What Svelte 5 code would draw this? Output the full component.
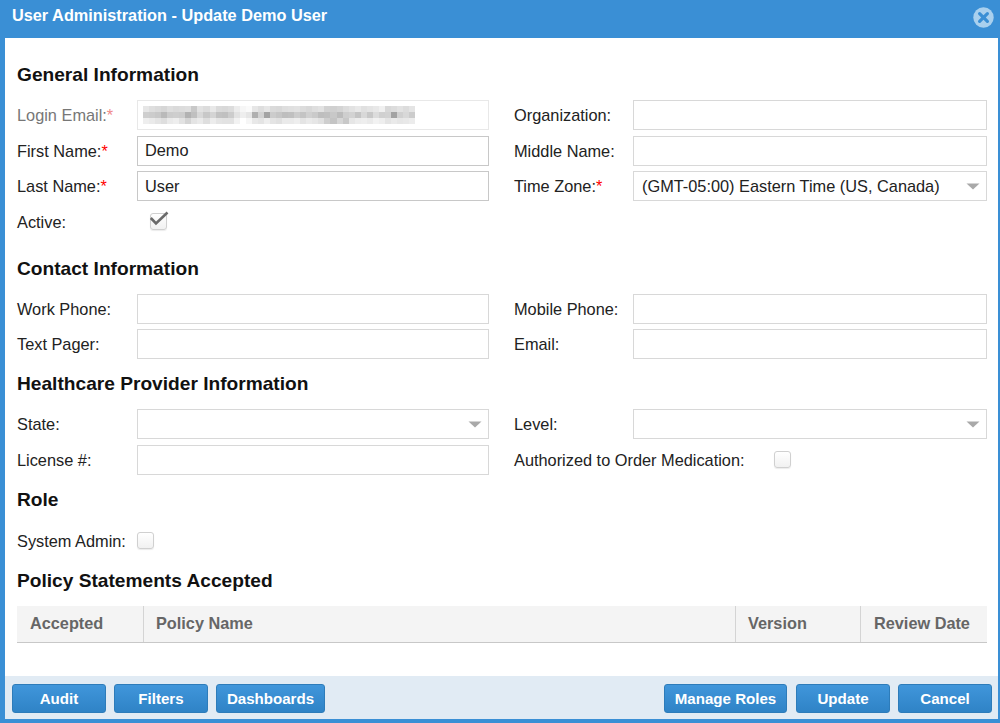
<script>
  const mosaic = [
    [0xe6,0xde,0xda,0xd6,0xde,0xda,0xdc,0xde,0xc8,0xe2,0xdc,0xe8,0xda,0xd8,0xdc,0xec,0xf6,0xfa,0xe6,0xde,0xe6,0xda,0xd8,0xde,0xe0,0xe2,0xdc,0xd8,0xde,0xe2,0xd2,0xd0,0xd4,0xdc,0xe2,0xe8,0xe0,0xe4,0xe8,0xf0,0xd8,0xdc,0xe2,0xdc,0xe4],
    [0xce,0xcc,0xc8,0xba,0xcc,0xce,0xcc,0xb2,0xc0,0xd8,0xc8,0xd4,0xc2,0xc0,0xcc,0xe2,0xee,0xe6,0xb0,0xd2,0xa4,0xcc,0xc6,0xbe,0xc0,0xcc,0xc4,0xd0,0xca,0xbe,0xc0,0xc8,0xbc,0xce,0xd2,0xc4,0xd8,0xc8,0xdc,0xd0,0xd2,0xa2,0xd0,0xd8,0xcc],
    [0xee,0xea,0xe4,0xde,0xea,0xee,0xe2,0xd4,0xe4,0xea,0xde,0xec,0xe4,0xe2,0xe2,0xf2,0xff,0xf6,0xe8,0xe4,0xee,0xe4,0xe0,0xea,0xea,0xee,0xe4,0xea,0xe6,0xe0,0xce,0xc4,0xd6,0xc8,0xe6,0xec,0xee,0xea,0xf2,0xee,0xe4,0xea,0xe6,0xe8,0xec]
  ];
  const hex = (v) => `rgb(${v},${v},${v})`;
</script>

{#snippet star()}<span class="req">*</span>{/snippet}
{#snippet caret()}<svg class="caret" width="14" height="7" viewBox="0 0 14 7"><path d="M0.5 0.5H13.5L7 6.5Z" fill="#a9a9a9"/></svg>{/snippet}
{#snippet box(checked)}
  <span class="cb">
    {#if checked}
      <svg width="22" height="22" viewBox="0 0 22 22"><path d="M2.8 11L8 16.5L19.5 5.5" fill="none" stroke="#6a6a6a" stroke-width="2.6"/></svg>
    {/if}
  </span>
{/snippet}

<div class="dialog">
  <header class="title">
    <span>User Administration - Update Demo User</span>
    <svg class="close" width="21" height="21" viewBox="0 0 21 21">
      <circle cx="10.5" cy="10.5" r="10.2" fill="#a9d0ee"/>
      <path d="M6.6 6.6L14.4 14.4M14.4 6.6L6.6 14.4" stroke="#3a8fd5" stroke-width="3.2" stroke-linecap="round"/>
    </svg>
  </header>

  <main class="body">
    <h2 class="h-general">General Information</h2>
    <div class="form">
      <div class="field"><label class="muted">Login Email:<span class="req soft">*</span></label>
        <div class="input disabled">
          <div class="mosaic">
            {#each mosaic as row}
              {#each row as v}<i style="background:{hex(v)}"></i>{/each}
            {/each}
          </div>
        </div>
      </div>
      <div class="field"><label>Organization:</label><div class="input"></div></div>
      <div class="field"><label>First Name:{@render star()}</label><div class="input strong">Demo</div></div>
      <div class="field"><label>Middle Name:</label><div class="input"></div></div>
      <div class="field"><label>Last Name:{@render star()}</label><div class="input strong">User</div></div>
      <div class="field"><label>Time Zone:{@render star()}</label><div class="input select">(GMT-05:00) Eastern Time (US, Canada){@render caret()}</div></div>
      <div class="field check-row active"><label>Active:</label>{@render box(true)}</div>
    </div>

    <h2 class="h-contact">Contact Information</h2>
    <div class="form">
      <div class="field"><label>Work Phone:</label><div class="input"></div></div>
      <div class="field"><label>Mobile Phone:</label><div class="input"></div></div>
      <div class="field"><label>Text Pager:</label><div class="input"></div></div>
      <div class="field"><label>Email:</label><div class="input"></div></div>
    </div>

    <h2 class="h-health">Healthcare Provider Information</h2>
    <div class="form">
      <div class="field"><label>State:</label><div class="input select">{@render caret()}</div></div>
      <div class="field"><label>Level:</label><div class="input select">{@render caret()}</div></div>
      <div class="field"><label>License #:</label><div class="input"></div></div>
      <div class="field auth"><label>Authorized to Order Medication:</label>{@render box(false)}</div>
    </div>

    <h2 class="h-role">Role</h2>
    <div class="field admin"><label>System Admin:</label>{@render box(false)}</div>

    <h2 class="h-policy">Policy Statements Accepted</h2>
    <div class="table">
      <div class="th c1">Accepted</div>
      <div class="th c2">Policy Name</div>
      <div class="th c3">Version</div>
      <div class="th c4">Review Date</div>
    </div>
  </main>

  <footer class="foot">
    <div class="group">
      <button class="w94">Audit</button>
      <button class="w94">Filters</button>
      <button class="w109">Dashboards</button>
    </div>
    <div class="group">
      <button class="w123">Manage Roles</button>
      <button class="w94">Update</button>
      <button class="w94">Cancel</button>
    </div>
  </footer>
</div>

<style>
  :global(body) { margin: 0; background: #fff; }
  .dialog {
    width: 1000px; height: 723px; box-sizing: border-box;
    display: flex; flex-direction: column;
    background: #3a8fd5;
    font-family: "Liberation Sans", Arial, sans-serif;
    color: #222;
    overflow: hidden;
  }
  .title {
    height: 38px; flex: none; box-sizing: border-box;
    display: flex; align-items: center; justify-content: space-between;
    padding: 0 6px 8px 12px;
    color: #fff; font-weight: 700; font-size: 16.3px;
  }
  .close { margin-top: 4px; }
  .body {
    flex: 1; min-height: 0; margin: 0 2px 0 5px; padding: 0 11px 0 12px;
    background: #fff;
  }
  h2 { margin: 0; font-size: 19.15px; line-height: 22px; font-weight: 700; color: #111; }
  .h-general { padding-top: 26px; padding-bottom: 14px; }
  .h-contact { padding-top: 21px; padding-bottom: 14px; }
  .h-health { padding-top: 14px; padding-bottom: 14px; }
  .h-role { padding-top: 14px; padding-bottom: 15px; }
  .h-policy { padding-top: 14px; padding-bottom: 14px; }
  .form { display: grid; grid-template-columns: 472px 473px; column-gap: 25px; row-gap: 5.5px; }
  .field { display: flex; align-items: center; min-height: 30px; font-size: 16.33px; }
  .field label { width: 120px; flex: none; white-space: nowrap; padding-top: 1px; box-sizing: border-box; }
  .form .field:nth-child(even) label { width: 119px; }
  .form .field.auth:nth-child(even) label { width: auto; }
  .muted { color: #777; }
  .req { color: #f00; }
  .req.soft { color: #f08a8a; }
  .input {
    flex: 1; height: 30px; box-sizing: border-box; position: relative;
    border: 1px solid #d8d8d8; background: #fff;
    display: flex; align-items: center; padding: 0 8px;
    font-size: 16.33px; color: #222; white-space: nowrap;
  }
  .input.strong { border-color: #c8c8c8; padding-left: 7px; }
  .input.disabled { border-color: #e8e8e8; padding-left: 5px; }
  .select { justify-content: space-between; }
  .select .caret { margin-left: auto; margin-right: -2px; }
  .mosaic { display: grid; grid-template-columns: repeat(45, 6.05px); grid-auto-rows: 6.2px; }
  .mosaic i { display: block; }
  .cb {
    width: 15px; height: 15px; flex: none; display: block; position: relative;
    border: 1px solid #d0d0d0; border-radius: 3px;
    background: linear-gradient(#fff, #f1f1f1);
    box-shadow: 0 1px 1px rgba(0,0,0,.08);
  }
  .cb svg { position: absolute; left: -3px; top: -7px; }
  .active .cb { margin-left: 13px; }
  .auth .cb { margin-left: 29px; }
  .admin label { width: auto; }
  .admin .cb { margin-left: 11px; }
  .table {
    display: grid; grid-template-columns: 126px 592px 125px 127px;
    height: 37px; box-sizing: border-box;
    background: #f4f4f4; border-bottom: 1.5px solid #c8c8c8;
  }
  .th {
    display: flex; align-items: center; padding-left: 12px; box-sizing: border-box;
    font-size: 16.3px; font-weight: 700; color: #666;
    border-left: 1px solid #d4d4d4;
  }
  .c1 { border-left: 0; padding-left: 13px; }
  .c4 { padding-left: 13px; }
  .foot {
    flex: none; height: 43px; box-sizing: border-box;
    margin: 0 2px 4px 5px; padding: 8px 6px 6px 7px;
    background: #e1ebf4;
    display: flex; justify-content: space-between;
  }
  .group { display: flex; gap: 8px; }
  button {
    height: 29px; padding: 0; box-sizing: border-box;
    border: 1px solid #2d7cba; border-radius: 3px;
    background: linear-gradient(#4096db, #2f83c6);
    color: #fff; font: 700 15.1px "Liberation Sans", Arial, sans-serif;
    text-align: center;
  }
  .w94 { width: 94px; }
  .w109 { width: 109px; }
  .w123 { width: 123px; margin-right: 1px; }
</style>
